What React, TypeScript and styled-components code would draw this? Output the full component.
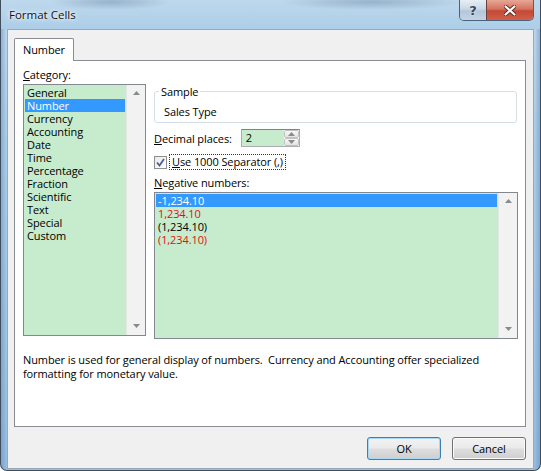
import React from 'react';
import styled, { createGlobalStyle } from 'styled-components';

const GlobalStyle = createGlobalStyle`
  html, body {
    margin: 0;
    padding: 0;
    width: 541px;
    height: 471px;
    overflow: hidden;
    background: #ffffff;
  }
  body {
    font-family: "Segoe UI", "Open Sans", "DejaVu Sans", sans-serif;
    font-size: 11px;
    letter-spacing: -0.1px;
    color: #000;
  }
`;

const Window = styled.div`
  box-sizing: border-box;
  width: 541px;
  height: 471px;
  display: flex;
  flex-direction: column;
  border: 1px solid #3f4d5c;
  border-top: none;
  border-radius: 0 0 7px 7px;
  overflow: hidden;
  background:
    linear-gradient(90deg, rgba(80, 130, 185, 0.45) 0px, rgba(255, 255, 255, 0) 6px, rgba(255, 255, 255, 0) 533px, rgba(80, 130, 185, 0.45) 100%),
    linear-gradient(180deg, #c4dcef 0%, #b0d0e9 30%, #a4c7e4 70%, #9bbfdf 100%);
`;

const TitleBar = styled.div`
  height: 29px;
  flex: none;
  display: flex;
  align-items: flex-start;
  justify-content: space-between;
  background:
    radial-gradient(ellipse 60px 8px at 110px 2px, rgba(80, 110, 140, 0.35), rgba(80, 110, 140, 0)),
    radial-gradient(ellipse 90px 8px at 370px 2px, rgba(80, 110, 140, 0.35), rgba(80, 110, 140, 0)),
    linear-gradient(180deg, #bed8ec 0%, #acceE8 100%);
`;

const Title = styled.div`
  padding: 8px 0 0 8px;
  font-size: 11.5px;
  letter-spacing: 0;
  line-height: 14px;
  color: #111;
  text-shadow: 0 0 6px #ffffff, 0 0 3px #ffffff;
`;

const Captions = styled.div`
  display: flex;
  margin-right: 6px;
  height: 20px;
  border: 1px solid #4c617a;
  border-top: none;
  border-radius: 0 0 5px 5px;
  overflow: hidden;
`;

const CaptionButton = styled.div<{ $close?: boolean }>`
  display: flex;
  align-items: center;
  justify-content: center;
  width: ${(p) => (p.$close ? '46px' : '26px')};
  height: 100%;
  border-left: ${(p) => (p.$close ? '1px solid #6b4040' : 'none')};
  background: ${(p) =>
    p.$close
      ? 'linear-gradient(180deg, #e8a797 0%, #d4735f 45%, #c44a35 55%, #d0604a 100%)'
      : 'linear-gradient(180deg, #e7eef5 0%, #c9d8e6 45%, #b4c6d9 55%, #c3d4e4 100%)'};
  color: #39485a;
  font-size: 13px;
  font-weight: bold;
  font-family: "DejaVu Sans", sans-serif;
  text-shadow: 0 0 2px #ffffff;
`;

const Client = styled.div`
  box-sizing: border-box;
  flex: 1;
  margin: 0 6px 1px 6px;
  background: #f0f0f0;
  border: 1px solid #98a8b9;
  padding: 8px 7px 0 6px;
  display: flex;
  flex-direction: column;
`;

const TabStrip = styled.div`
  display: flex;
  height: 22px;
  position: relative;
  z-index: 1;
`;

const Tab = styled.div`
  box-sizing: border-box;
  width: 60px;
  height: 23px;
  border: 1px solid #898c95;
  border-bottom: none;
  border-radius: 2px 2px 0 0;
  background: #ffffff;
  padding: 4px 0 0 8px;
  line-height: 14px;
`;

const Panel = styled.div`
  box-sizing: border-box;
  height: 367px;
  border: 1px solid #898c95;
  background: #ffffff;
  padding: 7px 6px 0 8px;
  display: flex;
  flex-direction: column;
`;

const Columns = styled.div`
  display: flex;
  gap: 8px;
`;

const LeftColumn = styled.div`
  width: 123px;
  display: flex;
  flex-direction: column;
`;

const RightColumn = styled.div`
  width: 364px;
  display: flex;
  flex-direction: column;
`;

const Label = styled.div<{ $gap?: number }>`
  line-height: 13px;
  height: 13px;
  margin-top: ${(p) => p.$gap ?? 0}px;
  white-space: nowrap;
`;

const Key = styled.span`
  text-decoration: underline;
`;

const ListBox = styled.div<{ $height: number; $gap: number }>`
  box-sizing: border-box;
  height: ${(p) => p.$height}px;
  margin-top: ${(p) => p.$gap}px;
  border: 1px solid #828790;
  display: flex;
  background: #c7ebcd;
`;

const Items = styled.div`
  flex: 1;
  padding: 1px;
  display: flex;
  flex-direction: column;
`;

const Item = styled.div<{ $selected?: boolean; $red?: boolean }>`
  height: 13px;
  line-height: 13px;
  padding-left: 2px;
  white-space: nowrap;
  background: ${(p) => (p.$selected ? '#3399ff' : 'transparent')};
  color: ${(p) => (p.$selected ? '#ffffff' : p.$red ? '#e01010' : '#000000')};
`;

const ScrollTrack = styled.div`
  width: 18px;
  background: #f2f2f2;
  border-left: 1px solid #e6e6e6;
  display: flex;
  flex-direction: column;
  justify-content: space-between;
  align-items: center;
  padding: 6px 0 7px;
`;

const SampleBox = styled.fieldset`
  box-sizing: border-box;
  margin: 17px 0 0 0;
  width: 363px;
  height: 38px;
  padding: 0 8px 3px 8px;
  border: 1px solid #d5dfe5;
  border-radius: 3px;
  min-width: 0;
`;

const Legend = styled.legend`
  padding: 0 2px;
  margin-left: -4px;
  line-height: 13px;
`;

const SampleText = styled.div`
  line-height: 13px;
  margin-top: 7px;
  padding-left: 1px;
`;

const DecimalRow = styled.div`
  display: flex;
  align-items: center;
  margin-top: 6px;
  height: 18px;
`;

const Spin = styled.div`
  box-sizing: border-box;
  display: flex;
  margin-left: 9px;
  width: 59px;
  height: 18px;
  border: 1px solid #abadb3;
  border-top-color: #7d8290;
  background: #ffffff;
`;

const SpinValue = styled.div`
  flex: 1;
  background: #c7ebcd;
  padding-left: 4px;
  line-height: 16px;
`;

const SpinButtons = styled.div`
  width: 15px;
  display: flex;
  flex-direction: column;
  border-left: 1px solid #e0e0e0;
`;

const SpinHalf = styled.div`
  flex: 1;
  display: flex;
  align-items: center;
  justify-content: center;
  background: linear-gradient(180deg, #f7f7f7 0%, #e3e3e3 100%);
  border: 1px solid #c2c2c2;
  border-radius: 2px;
`;

const CheckRow = styled.div`
  display: flex;
  align-items: center;
  margin-top: 7px;
  height: 16px;
`;

const CheckBox = styled.div`
  box-sizing: border-box;
  width: 13px;
  height: 13px;
  border: 1px solid #8e8f8f;
  background: linear-gradient(135deg, #e9e9e9 0%, #ffffff 100%);
  display: flex;
  align-items: center;
  justify-content: center;
`;

const FocusLabel = styled.div`
  margin-left: 2px;
  padding: 0 2px 0 2px;
  line-height: 14px;
  border: 1px dotted #333;
  white-space: nowrap;
`;

const Description = styled.div`
  margin-top: 14px;
  line-height: 14px;
  width: 495px;
`;

const ButtonRow = styled.div`
  display: flex;
  justify-content: flex-end;
  gap: 11px;
  margin-top: 10px;
`;

const Button = styled.div<{ $default?: boolean }>`
  box-sizing: border-box;
  width: 74px;
  height: 23px;
  display: flex;
  align-items: center;
  justify-content: center;
  border: 1px solid ${(p) => (p.$default ? '#3c7fb1' : '#707070')};
  border-radius: 3px;
  background: linear-gradient(180deg, #f2f2f2 0%, #ebebeb 45%, #dddddd 55%, #cfcfcf 100%);
  box-shadow: inset 0 0 0 1px ${(p) => (p.$default ? '#a8d8f3' : '#fbfbfb')};
`;

const Arrow = ({ down }: { down?: boolean }) => (
  <svg width="7" height="4" viewBox="0 0 7 4">
    <path d={down ? 'M0 0 H7 L3.5 4 Z' : 'M0 4 H7 L3.5 0 Z'} fill="#8a8a8a" />
  </svg>
);

const Scroll = () => (
  <ScrollTrack>
    <Arrow />
    <Arrow down />
  </ScrollTrack>
);

const categories = [
  'General', 'Number', 'Currency', 'Accounting', 'Date', 'Time',
  'Percentage', 'Fraction', 'Scientific', 'Text', 'Special', 'Custom',
];

const negatives = [
  { text: '-1,234.10', red: false },
  { text: '1,234.10', red: true },
  { text: '(1,234.10)', red: false },
  { text: '(1,234.10)', red: true },
];

const App: React.FC = () => (
  <>
    <GlobalStyle />
    <Window>
      <TitleBar>
        <Title>Format Cells</Title>
        <Captions>
          <CaptionButton>?</CaptionButton>
          <CaptionButton $close>
            <svg width="12" height="11" viewBox="0 0 12 11">
              <path d="M1.5 1.5 L10.5 9.5 M10.5 1.5 L1.5 9.5" stroke="#5a2a22" strokeWidth="4" strokeLinecap="round" />
              <path d="M1.5 1.5 L10.5 9.5 M10.5 1.5 L1.5 9.5" stroke="#ffffff" strokeWidth="2.2" strokeLinecap="round" />
            </svg>
          </CaptionButton>
        </Captions>
      </TitleBar>
      <Client>
        <TabStrip>
          <Tab>Number</Tab>
        </TabStrip>
        <Panel>
          <Columns>
            <LeftColumn>
              <Label><Key>C</Key>ategory:</Label>
              <ListBox $height={252} $gap={3}>
                <Items>
                  {categories.map((c) => (
                    <Item key={c} $selected={c === 'Number'}>{c}</Item>
                  ))}
                </Items>
                <Scroll />
              </ListBox>
            </LeftColumn>
            <RightColumn>
              <SampleBox>
                <Legend>Sample</Legend>
                <SampleText>Sales Type</SampleText>
              </SampleBox>
              <DecimalRow>
                <Label><Key>D</Key>ecimal places:</Label>
                <Spin>
                  <SpinValue>2</SpinValue>
                  <SpinButtons>
                    <SpinHalf><Arrow /></SpinHalf>
                    <SpinHalf><Arrow down /></SpinHalf>
                  </SpinButtons>
                </Spin>
              </DecimalRow>
              <CheckRow>
                <CheckBox>
                  <svg width="9" height="9" viewBox="0 0 9 9">
                    <path d="M1 4.5 L3.5 7.5 L8 1" stroke="#4a5f97" strokeWidth="1.8" fill="none" />
                  </svg>
                </CheckBox>
                <FocusLabel><Key>U</Key>se 1000 Separator (,)</FocusLabel>
              </CheckRow>
              <Label $gap={6}><Key>N</Key>egative numbers:</Label>
              <ListBox $height={147} $gap={3}>
                <Items>
                  {negatives.map((n, i) => (
                    <Item key={i} $selected={i === 0} $red={n.red}>{n.text}</Item>
                  ))}
                </Items>
                <Scroll />
              </ListBox>
            </RightColumn>
          </Columns>
          <Description>
            Number is used for general display of numbers.&nbsp; Currency and Accounting offer specialized formatting for monetary value.
          </Description>
        </Panel>
        <ButtonRow>
          <Button $default>OK</Button>
          <Button>Cancel</Button>
        </ButtonRow>
      </Client>
    </Window>
  </>
);

export default App;
